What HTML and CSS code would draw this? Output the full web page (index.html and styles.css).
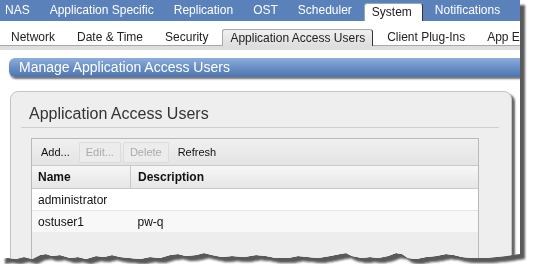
FILE: index.html
```html
<!DOCTYPE html>
<html lang="en">
<head>
    <meta charset="UTF-8">
    <meta name="viewport" content="width=device-width, initial-scale=1.0">
    <title>Application Access Users</title>
    <link rel="stylesheet" href="styles.css">
</head>
<body>

    <div class="shot">
        <div class="page">

            <ul class="main-tabs">
                <li>NAS</li>
                <li>Application Specific</li>
                <li>Replication</li>
                <li>OST</li>
                <li>Scheduler</li>
                <li class="active">System</li>
                <li>Notifications</li>
            </ul>

            <ul class="sub-tabs">
                <li>Network</li>
                <li>Date &amp; Time</li>
                <li>Security</li>
                <li class="active">Application Access Users</li>
                <li>Client Plug-Ins</li>
                <li>App Encryption</li>
            </ul>
            <div class="sub-band"></div>

            <div class="title-bar">Manage Application Access Users</div>

            <section class="panel">
                <h2>Application Access Users</h2>

                <div class="grid">
                    <div class="toolbar">
                        <button>Add...</button>
                        <button class="disabled">Edit...</button>
                        <button class="disabled">Delete</button>
                        <button>Refresh</button>
                    </div>
                    <table>
                        <thead>
                            <tr>
                                <th class="col-name">Name</th>
                                <th>Description</th>
                            </tr>
                        </thead>
                        <tbody>
                            <tr>
                                <td>administrator</td>
                                <td></td>
                            </tr>
                            <tr class="alt">
                                <td>ostuser1</td>
                                <td>pw-q</td>
                            </tr>
                        </tbody>
                    </table>
                    <div class="grid-empty"></div>
                </div>
            </section>

        </div>
    </div>

</body>
</html>
```

FILE: styles.css
```css
body {
    margin: 0;
    background-color: #fff;
    font-family: "Liberation Sans", Arial, sans-serif;
    font-size: 12px;
    color: #111;
}

/* screenshot look: torn bottom edge with a drop shadow */
.shot {
    width: 520px;
    filter: drop-shadow(5px 5px 1px rgba(0, 0, 0, 0.65));
}
.page {
    height: 264px;
    background-color: #fff;
    overflow: hidden;
    clip-path: polygon(0 0, 520px 0, 520px 254px, 512px 255px, 506px 256px, 496px 257px, 486px 258px, 472px 258px,
        462px 257px, 454px 255px, 446px 254px, 436px 256px, 426px 257px, 416px 259px, 408px 258px, 402px 254px,
        396px 253px, 388px 256px, 378px 258px, 370px 257px, 362px 258px, 352px 256px, 346px 253px, 340px 254px,
        330px 256px, 318px 258px, 308px 257px, 298px 256px, 288px 258px, 276px 258px, 266px 256px, 256px 255px,
        244px 257px, 232px 256px, 222px 257px, 212px 255px, 204px 253px, 196px 255px, 186px 256px, 178px 254px,
        170px 255px, 160px 258px, 150px 257px, 140px 259px, 130px 258px, 120px 257px, 112px 255px, 104px 257px,
        96px 256px, 86px 259px, 78px 257px, 70px 258px, 60px 255px, 52px 256px, 46px 254px, 40px 255px,
        32px 259px, 24px 257px, 16px 259px, 8px 258px, 0 259px);
}

/* top navigation */
.main-tabs {
    display: flex;
    margin: 0;
    padding: 0;
    list-style: none;
    height: 21px;
    background-color: #5b81ba;
    white-space: nowrap;
}
.main-tabs li {
    margin: 0 2px;
    padding: 0 8px;
    line-height: 21px;
    color: #fff;
}
.main-tabs li:first-child {
    margin-left: -3px;
}
.main-tabs li.active {
    margin-top: 3px;
    padding: 0 10px 0 7px;
    line-height: 17px;
    background-color: #fff;
    color: #222;
    border: 1px solid #9aa;
    border-right-color: #333;
    border-bottom: none;
    border-radius: 3px 3px 0 0;
}

.sub-tabs {
    display: flex;
    align-items: flex-end;
    margin: 0;
    padding: 0;
    list-style: none;
    height: 24px;
    border-bottom: 1px solid #a8a8a8;
    white-space: nowrap;
}
.sub-tabs li {
    margin: 0 3px;
    padding: 0 8px;
    line-height: 16px;
    color: #222;
}
.sub-tabs li.active {
    margin-bottom: -1px;
    padding: 0 7px;
    background: linear-gradient(#f0f0f0, #dedede);
    border: 1px solid #aaa;
    border-right-color: #333;
    border-bottom: none;
    border-radius: 3px 3px 0 0;
}
.sub-band {
    height: 4px;
    background-color: #dedede;
}

.title-bar {
    margin: 8px 0 0 9px;
    height: 19px;
    padding-left: 10px;
    line-height: 19px;
    font-size: 14px;
    color: #fff;
    white-space: nowrap;
    background: linear-gradient(#8eaddb, #6a8fc6 50%, #4d74b0);
    border-radius: 6px 0 0 6px;
    box-shadow: 1px 2px 2px rgba(0, 0, 0, 0.55);
}

/* content panel */
.panel {
    margin: 14px 0 0 10px;
    width: 500px;
    height: 220px;
    padding-top: 12px;
    background-color: #eee;
    border: 1px solid #c4c4c4;
    border-radius: 8px;
    box-shadow: 3px 3px 2px rgba(0, 0, 0, 0.6);
}
.panel h2 {
    margin: 0 12px 0 10px;
    padding: 0 0 3px 8px;
    font-size: 16px;
    line-height: 20px;
    font-weight: normal;
    color: #333;
    border-bottom: 1px solid #cfcfcf;
}

.grid {
    margin: 10px 0 0 20px;
    width: 446px;
    border: 1px solid #bcb8b8;
}
.toolbar {
    display: flex;
    align-items: center;
    height: 26px;
    padding: 0 2px;
    background: linear-gradient(#f0f0f0, #e4e4e4);
    border-bottom: 1px solid #c8c8c8;
}
.toolbar button {
    height: 21px;
    margin-right: 2px;
    padding: 0 6px;
    font-family: inherit;
    font-size: 11px;
    color: #111;
    background: none;
    border: 1px solid transparent;
    border-radius: 2px;
}
.toolbar button.disabled {
    color: #aaa;
    background-color: #ececec;
    border-color: #dcdcdc;
}

table {
    width: 100%;
    border-collapse: collapse;
}
th {
    height: 22px;
    padding: 0 6px;
    text-align: left;
    font-weight: bold;
    color: #111;
    background: linear-gradient(#f6f6f6, #e6e6e6);
    border-bottom: 1px solid #c8c8c8;
}
th + th {
    padding-left: 7px;
    border-left: 1px solid #c8c8c8;
}
.col-name {
    width: 86px;
}
td {
    height: 21px;
    padding: 0 6px;
    background-color: #fff;
}
td + td {
    padding-left: 7px;
}
tr.alt td {
    background-color: #f8f8f8;
    border-top: 1px solid #e6e6e6;
}
.grid-empty {
    height: 60px;
    background-color: #ededed;
}
```
